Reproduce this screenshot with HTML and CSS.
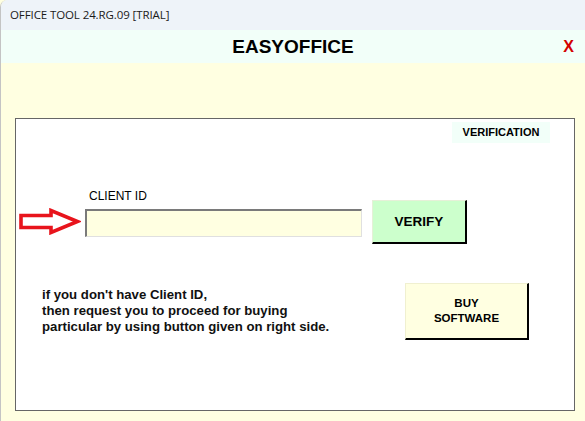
FILE: index.html
```html
<!DOCTYPE html>
<html>
<head>
<meta charset="utf-8">
<link rel="stylesheet" href="styles.css">
</head>
<body>
<div class="window">
  <div class="titlebar">OFFICE TOOL 24.RG.09 [TRIAL]</div>
  <div class="header">
    <span></span>
    <h1 class="app-title">EASYOFFICE</h1>
    <span class="close">X</span>
  </div>
  <div class="main">
    <div class="frame">
      <div class="tab-row"><span class="tab-label">VERIFICATION</span></div>
      <div class="verify-row">
        <svg class="arrow" width="62" height="27" viewBox="0 0 62 27">
          <polygon points="2,7.5 32,7.5 32,2.5 58.5,13.5 32,24.5 32,19.5 2,19.5" fill="none" stroke="#e8141c" stroke-width="3.6" stroke-linejoin="miter"/>
        </svg>
        <div class="field">
          <label class="field-label">CLIENT ID</label>
          <div class="field-input"></div>
        </div>
        <button class="btn btn-verify">VERIFY</button>
      </div>
      <div class="buy-row">
        <p class="note">if you don't have Client ID,<br>then request you to proceed for buying<br>particular by using button given on right side.</p>
        <button class="btn btn-buy">BUY<br>SOFTWARE</button>
      </div>
    </div>
  </div>
</div>
</body>
</html>
```
FILE: styles.css
```css
html, body {
  margin: 0;
  padding: 0;
}
body {
  width: 585px;
  height: 421px;
  overflow: hidden;
  background: #ffffe1;
  font-family: "Liberation Sans", Arial, sans-serif;
}
.window {
  width: 585px;
  height: 421px;
  box-sizing: border-box;
  border-left: 1px solid #c4c4c4;
  border-top-left-radius: 7px;
  overflow: hidden;
  display: flex;
  flex-direction: column;
}
.titlebar {
  height: 30px;
  flex: none;
  background: #eef3f9;
  color: #1a1a1a;
  font-family: "Open Sans", "Noto Sans", sans-serif;
  font-size: 11.5px;
  line-height: 30px;
  padding-left: 9px;
  letter-spacing: -0.1px;
}
.header {
  height: 33px;
  flex: none;
  background: #f2fff9;
  display: grid;
  grid-template-columns: 1fr auto 1fr;
  align-items: center;
}
.app-title {
  margin: 0;
  font-size: 19px;
  font-weight: bold;
  color: #000;
  line-height: 33px;
}
.close {
  justify-self: end;
  padding-right: 11px;
  color: #d40000;
  font-weight: bold;
  font-size: 16px;
}
.main {
  flex: 1;
  background: #ffffe1;
  padding: 55px 10px 10px 14px;
  display: flex;
}
.frame {
  flex: 1;
  background: #fff;
  border: 1px solid #666;
  display: flex;
  flex-direction: column;
}
.tab-row {
  display: flex;
  justify-content: flex-end;
  padding-right: 24px;
  margin-top: 3px;
}
.tab-label {
  width: 98px;
  height: 21px;
  background: #f2fff9;
  font-size: 11px;
  font-weight: bold;
  line-height: 21px;
  text-align: center;
  color: #000;
}
.verify-row {
  display: flex;
  align-items: flex-start;
  margin-top: 46px;
  padding-left: 3px;
}
.arrow {
  margin-top: 19px;
  flex: none;
}
.field {
  margin-left: 4px;
  display: flex;
  flex-direction: column;
}
.field-label {
  font-size: 12px;
  line-height: 14px;
  padding-left: 4px;
  margin-bottom: 6px;
  color: #000;
}
.field-input {
  width: 274px;
  height: 25px;
  background: #ffffe1;
  border-top: 2px solid #7a7a7a;
  border-left: 2px solid #7a7a7a;
  border-bottom: 1px solid #e0e0e0;
  border-right: 1px solid #e0e0e0;
}
.btn {
  font-family: "Liberation Sans", Arial, sans-serif;
  font-weight: bold;
  color: #000;
  padding: 0;
  margin: 0;
  border-top: 1px solid #e6f0d8;
  border-left: 1px solid #e6f0d8;
  border-right: 2px solid #000;
  border-bottom: 2px solid #000;
  box-sizing: border-box;
}
.btn-verify {
  margin-left: 10px;
  margin-top: 11px;
  width: 95px;
  height: 44px;
  background: #ccffcc;
  font-size: 13.5px;
}
.buy-row {
  display: flex;
  align-items: flex-start;
  margin-top: 39px;
  padding-left: 26px;
}
.note {
  margin: 4px 0 0 0;
  width: 363px;
  flex: none;
  font-size: 13.2px;
  font-weight: bold;
  line-height: 16px;
  color: #111;
}
.btn-buy {
  width: 124px;
  height: 57px;
  background: #ffffe1;
  font-size: 11.5px;
  line-height: 15px;
  border-top-color: #f0f0d0;
  border-left-color: #f0f0d0;
}
```
